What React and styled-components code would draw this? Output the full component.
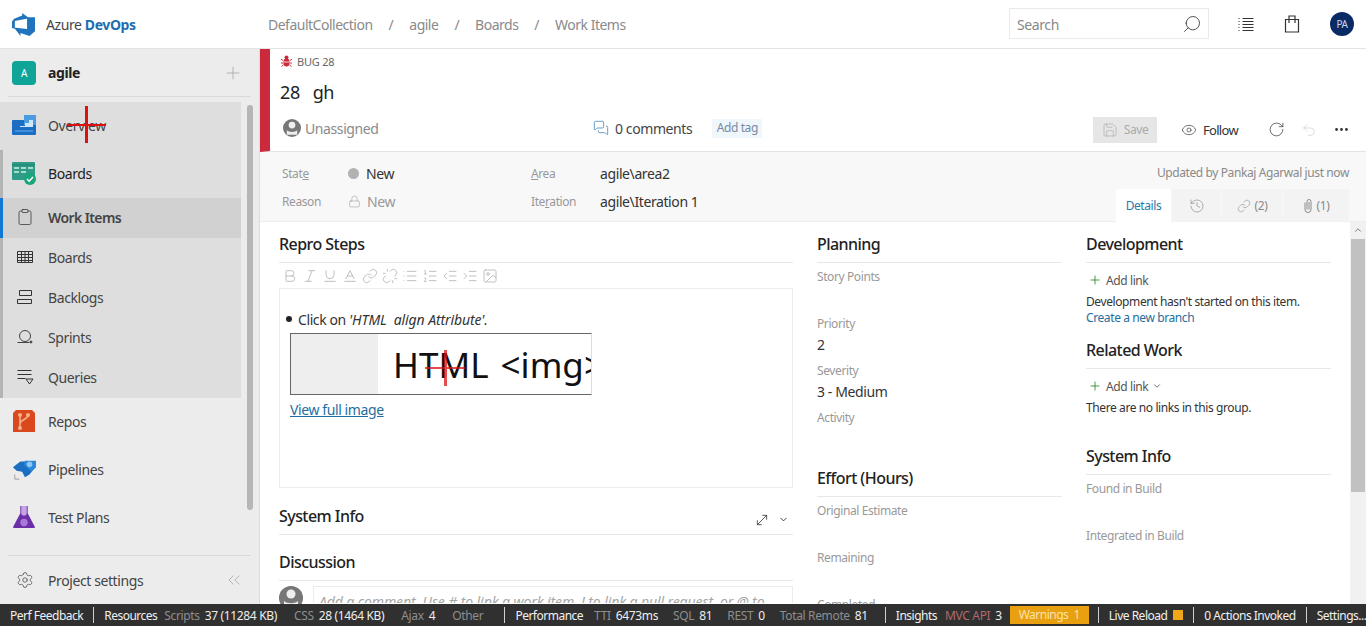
import React from 'react'
import styled, { createGlobalStyle } from 'styled-components'
import {
  Search, Plus, Eye, RotateCw, Undo2, MoreHorizontal, History,
  Lock, Settings, ChevronsLeft, ChevronDown, MoveDiagonal, MessagesSquare, Save, Bold, Italic, Underline,
  Link, Unlink, List, ListOrdered, Indent, Outdent, Image, Baseline, Clipboard, ChevronUp,
} from 'lucide-react'

const GlobalStyle = createGlobalStyle`
  html, body { margin: 0; padding: 0; height: 100%; overflow: hidden; }
  body { font-family: "Noto Sans", "Open Sans", sans-serif; font-size: 13px; color: #333; background: #fff; letter-spacing: -0.4px; }
  * { box-sizing: border-box; }
`

const Page = styled.div`
  height: 626px;
  display: flex;
  flex-direction: column;
  position: relative;
  overflow: hidden;
`

/* top bar */
const TopBar = styled.header`
  height: 49px;
  flex: none;
  display: flex;
  align-items: center;
  border-bottom: 1px solid #e4e4e4;
`
const Brand = styled.div`
  width: 268px;
  flex: none;
  display: flex;
  align-items: center;
  padding-left: 12px;
  gap: 11px;
  font-size: 14px;
  color: #444;
  b { color: #1f6fb0; font-weight: 700; }
`
const Crumbs = styled.nav`
  flex: 1;
  display: flex;
  align-items: center;
  gap: 16px;
  font-size: 14px;
  letter-spacing: -0.5px;
  color: #8a8a8a;
`
const SearchBox = styled.div`
  width: 200px;
  height: 31px;
  margin-top: -1px;
  display: flex;
  align-items: center;
  justify-content: space-between;
  padding: 1px 6px 0 7px;
  border: 1px solid #eaeaea;
  font-size: 14px;
  color: #888;
`
const TopIcons = styled.div`
  width: 157px;
  display: flex;
  align-items: center;
  padding-left: 28px;
  gap: 29px;
  color: #333;
`
const Avatar = styled.div`
  width: 24px;
  height: 24px;
  border-radius: 50%;
  margin-left: 1px;
  background: #0a2a66;
  color: #cfd8ea;
  font-size: 10px;
  display: flex;
  align-items: center;
  justify-content: center;
`

const Body = styled.div`
  flex: 1;
  min-height: 0;
  display: flex;
`

/* left navigation */
const Side = styled.aside`
  width: 260px;
  flex: none;
  display: flex;
  flex-direction: column;
  background: #ececec;
  border-right: 1px solid #dcdcdc;
`
const Project = styled.div`
  height: 48px;
  flex: none;
  margin: 0 8px 5px;
  padding: 0 8px 0 4px;
  border-bottom: 1px solid #d9d9d9;
  display: flex;
  align-items: center;
  gap: 12px;
  font-size: 14px;
  font-weight: 700;
  color: #222;
  span:last-child { margin-left: auto; color: #aaa; display: flex; }
`
const ProjectBadge = styled.span`
  width: 24px;
  height: 24px;
  border-radius: 4px;
  background: #0ea598;
  color: #fff;
  font-size: 10px;
  font-weight: 400;
  display: flex;
  align-items: center;
  justify-content: center;
`
const NavWrap = styled.div`
  flex: 1;
  min-height: 0;
  display: flex;
`
const NavList = styled.div`
  width: 241px;
  flex: none;
`
const NavItem = styled.div`
  height: ${p => (p.$sub ? 40 : 48)}px;
  display: flex;
  align-items: center;
  gap: ${p => (p.$sub ? 14 : 12)}px;
  padding: 0 0 2px ${p => (p.$sub ? 16 : 12)}px;
  font-size: 14px;
  letter-spacing: ${p => (p.$selected ? -0.6 : -0.4)}px;
  color: ${p => (p.$strong ? '#222' : '#444')};
  font-weight: ${p => (p.$selected ? 600 : 400)};
  background: ${p => (p.$selected ? '#d1d1d1' : p.$tinted ? '#dedede' : 'transparent')};
  box-shadow: inset 3px 0 0 ${p => (p.$selected ? '#0f78d4' : p.$group ? '#b4b4b4' : 'transparent')};
  svg { flex: none; }
`
const NavScroll = styled.div`
  flex: 1;
  padding: 3px 6px 0;
  div { height: 405px; width: 6px; background: #b6b6b6; border-radius: 3px; }
`
const SideFoot = styled.div`
  height: 49px;
  flex: none;
  margin: 0 8px;
  padding: 0 7px 0 8px;
  border-top: 1px solid #d9d9d9;
  display: flex;
  align-items: center;
  gap: 14px;
  font-size: 14px;
  color: #444;
  span { flex: 1; }
`

/* work item */
const Main = styled.main`
  flex: 1;
  min-width: 0;
  display: flex;
  flex-direction: column;
  overflow: hidden;
`
const ItemHead = styled.section`
  height: 103px;
  flex: none;
  display: flex;
  border-bottom: 1px solid #e4e4e4;
  border-left: 10px solid #cc293d;
`
const HeadInner = styled.div`
  flex: 1;
  padding: 4px 0 0 10px;
`
const BugLine = styled.div`
  height: 16px;
  display: flex;
  align-items: center;
  gap: 5px;
  padding-left: 1px;
  font-size: 11px;
  letter-spacing: -0.2px;
  color: #666;
`
const Title = styled.div`
  margin-top: 10px;
  height: 28px;
  font-size: 18px;
  line-height: 26px;
  color: #222;
  white-space: pre;
`
const HeadRow = styled.div`
  margin-top: 6px;
  display: flex;
  align-items: center;
  height: 30px;
`
const Assigned = styled.div`
  width: 310px;
  margin-left: 3px;
  display: flex;
  align-items: center;
  gap: 4px;
  font-size: 14px;
  color: #8a8a8a;
`
const Comments = styled.div`
  display: flex;
  align-items: center;
  gap: 6px;
  font-size: 14px;
  color: #444;
  svg { color: #1f6fb0; }
`
const Tag = styled.span`
  margin-left: 20px;
  width: 50px;
  text-align: center;
  height: 19px;
  line-height: 18px;
  background: #eff6fc;
  color: #7a8aa0;
  font-size: 12px;
`
const Actions = styled.div`
  margin-left: auto;
  margin-top: 3px;
  padding-right: 16px;
  display: flex;
  align-items: center;
  color: #333;
`
const SaveBtn = styled.div`
  width: 64px;
  height: 26px;
  background: #e6e6e6;
  color: #aaa;
  font-size: 12px;
  display: flex;
  align-items: center;
  justify-content: center;
  gap: 6px;
`
const FollowBtn = styled.div`
  margin-left: 24px;
  display: flex;
  align-items: center;
  gap: 6px;
  font-size: 13px;
  letter-spacing: -0.7px;
  color: #333;
  width: 87px;
`
const ActionIcon = styled.span`
  display: flex;
  margin-right: ${p => p.$gap || 0}px;
  color: ${p => (p.$muted ? '#ccc' : '#333')};
`

/* state band */
const Band = styled.section`
  height: 70px;
  flex: none;
  background: #f8f8f8;
  display: flex;
  border-bottom: 1px solid #ececec;
`
const BandGrid = styled.div`
  flex: 1;
  display: grid;
  grid-template-columns: 66px 183px 69px 1fr;
  grid-auto-rows: 28px;
  padding: 7px 0 0 22px;
  align-items: center;
`
const BandLabel = styled.div`
  font-size: 12px;
  color: #999;
  u { text-decoration-thickness: 1px; }
`
const BandValue = styled.div`
  display: flex;
  align-items: center;
  gap: 6px;
  font-size: 14px;
  color: ${p => (p.$muted ? '#999' : '#333')};
`
const Dot = styled.i`
  width: 11px;
  height: 11px;
  border-radius: 50%;
  background: #b2b2b2;
  margin-right: 1px;
`
const BandRight = styled.div`
  width: 260px;
  padding-right: 17px;
  display: flex;
  flex-direction: column;
  align-items: flex-end;
`
const Updated = styled.div`
  margin-top: 12px;
  font-size: 12px;
  color: #8a8a8a;
  height: 25px;
`
const Tabs = styled.div`
  display: flex;
  gap: 1px;
  height: 33px;
  margin-bottom: -1px;
`
const TabItem = styled.div`
  width: ${p => p.$w}px;
  display: flex;
  align-items: center;
  justify-content: center;
  gap: 4px;
  font-size: 12px;
  color: ${p => (p.$active ? '#2a7aa8' : '#8a8a8a')};
  background: ${p => (p.$active ? '#fff' : '#f3f3f3')};
`

/* form area */
const Scroller = styled.div`
  flex: 1;
  min-height: 0;
  display: flex;
`
const Form = styled.div`
  flex: 1;
  display: grid;
  grid-template-columns: 514px 245px 245px;
  column-gap: 24px;
  padding: 11px 0 0 19px;
  align-content: start;
  align-items: start;
`
const Column = styled.div`
  display: flex;
  flex-direction: column;
`
const Heading = styled.div`
  height: 30px;
  flex: none;
  display: flex;
  align-items: center;
  justify-content: space-between;
  border-bottom: 1px solid #e8e8e8;
  font-size: 16px;
  font-weight: 500;
  letter-spacing: -0.55px;
  color: #222;
  padding-bottom: 8px;
  margin-top: ${p => p.$top || 0}px;
`
const Toolbar = styled.div`
  height: 25px;
  display: flex;
  align-items: center;
  padding: 1px 0 0 3px;
  gap: 4px;
  color: #bbb;
`
const Editor = styled.div`
  height: 200px;
  border: 1px solid #ececec;
  padding: 21px 0 0 6px;
  font-size: 14px;
  color: #333;
`
const Bullet = styled.div`
  display: flex;
  gap: 6px;
  align-items: center;
  height: 18px;
  white-space: pre;
  i { width: 6px; height: 6px; border-radius: 50%; background: #222; }
  em { font-style: italic; letter-spacing: -0.1px; }
`
const Shot = styled.div`
  margin: 5px 0 0 4px;
  width: 302px;
  height: 62px;
  border: 1px solid #666;
  border-right-color: #ddd;
  overflow: hidden;
  display: flex;
  align-items: center;
  font-size: 35px;
  color: #111;
  white-space: nowrap;
  letter-spacing: 0;
  word-spacing: 3px;
  &::before {
    content: '';
    width: 87px;
    align-self: stretch;
    background: #eee;
    flex: none;
    margin-right: 15px;
  }
`
const FullLink = styled.a`
  display: block;
  margin: 5px 0 0 4px;
  font-size: 14px;
  color: #1f6e9e;
  text-decoration: underline;
`
const InfoBar = styled.span`
  display: flex;
  align-items: center;
  gap: 8px;
  color: #333;
  margin-top: 8px;
  margin-right: 4px;
`
const CommentRow = styled.div`
  display: flex;
  gap: 10px;
  margin-top: 5px;
`
const Person = styled.div`
  width: 24px;
  height: 24px;
  flex: none;
  border-radius: 50%;
  background: #8a8a8a;
  overflow: hidden;
`
const CommentBox = styled.div`
  flex: 1;
  height: 17px;
  border: 1px solid #ececec;
  border-bottom: 0;
  padding: 5px 0 0 5px;
  font-style: italic;
  font-size: 14px;
  letter-spacing: -0.1px;
  color: #a6a6a6;
  white-space: nowrap;
  overflow: hidden;
`
const Field = styled.div`
  height: 47px;
  flex: none;
  padding-top: 5px;
`
const FieldLabel = styled.div`
  height: 18px;
  font-size: 12px;
  color: #999;
  line-height: 18px;
`
const FieldValue = styled.div`
  margin-top: 2px;
  font-size: 14px;
  color: #333;
  line-height: 20px;
`
const AddLink = styled.div`
  display: flex;
  align-items: center;
  gap: 4px;
  margin: 8px 0 0 2px;
  font-size: 12px;
  color: #555;
  height: 18px;
  svg:first-child { color: #107c10; }
`
const Note = styled.div`
  font-size: 12px;
  color: #333;
  line-height: 16px;
  margin-top: ${p => p.$top || 0}px;
`
const BranchLink = styled(Note)`
  color: #1f6e9e;
`
const VScroll = styled.div`
  width: 16px;
  flex: none;
  background: #f1f1f1;
  display: flex;
  flex-direction: column;
  align-items: center;
  color: #666;
  div { margin-top: 4px; width: 14px; height: 253px; background: #c1c1c1; }
`

/* perf bar */
const PerfBar = styled.footer`
  height: 22px;
  flex: none;
  background: #303030;
  color: #f0f0f0;
  display: flex;
  align-items: center;
  padding-left: 10px;
  font-size: 12px;
  white-space: nowrap;
  overflow: hidden;
  letter-spacing: -0.5px;
`
const PerfGroup = styled.div`
  display: flex;
  align-items: center;
  gap: ${p => p.$gap || 0}px;
  height: 16px;
  padding-right: ${p => p.$pad ?? 10}px;
  margin-right: 10px;
  border-right: ${p => (p.$last ? 'none' : '1px solid #d0d0d0')};
`
const PerfLabel = styled.span`
  margin-right: ${p => p.$tight || 0}px;
`
const PerfStat = styled.span`
  color: #eee;
  letter-spacing: -0.35px;
  i { font-style: normal; color: ${p => p.$c || '#8e8e8e'}; margin-right: 5px; }
`
const Warn = styled.span`
  background: #e8a010;
  color: #fbe3a8;
  width: 79px;
  height: 18px;
  line-height: 18px;
  text-align: center;
  white-space: pre;
`
const Square = styled.i`
  display: inline-block;
  width: 10px;
  height: 10px;
  background: #f0a818;
  margin-left: 6px;
`

/* red crosshair annotations lying over the page */
const Cross = styled.div`
  position: absolute;
  left: ${p => p.$x}px;
  top: ${p => p.$y}px;
  width: ${p => p.$w}px;
  height: ${p => p.$h}px;
  background: linear-gradient(#dd1111, #dd1111) center/100% 2px no-repeat,
    linear-gradient(#dd1111, #dd1111) center/3px 100% no-repeat;
  opacity: ${p => p.$o || 1};
`

const LogoMark = () => (
  <svg width="23" height="23" viewBox="0 0 24 24" fill="#1f74bd">
    <path d="M0 8.877L2.247 5.91l8.405-3.416V.022l7.37 5.393L2.966 8.338v8.225L0 15.707zm24-4.45v14.651l-5.753 4.9-9.303-3.057v3.056l-6.978-8.965 13.748 1.627V4.428z" />
  </svg>
)
const OverviewIcon = () => (
  <svg width="24" height="24" viewBox="0 0 24 24">
    <rect y="7" width="24" height="15" rx="1" fill="#1b6ec2" />
    <rect x="12" y="2" width="12" height="10" fill="#4a9be0" />
    <path d="M8 13h5v-3h4V7h4v7H8z" fill="#cfe6fa" />
    <rect x="3" y="17" width="18" height="2" fill="#3f8fdc" />
  </svg>
)
const BoardsIcon = () => (
  <svg width="24" height="24" viewBox="0 0 24 24">
    <rect y="1" width="23" height="18" rx="1" fill="#2f9c87" />
    <path d="M0 4h23" stroke="#1d7f6c" strokeWidth="1" />
    <path d="M2 6h5v2H2zM2 10h5v2H2zM9 6h5v2H9zM16 6h5v2h-5zM9 10h5v2H9z" fill="#a8dccf" />
    <circle cx="18" cy="18" r="6" fill="#19a67a" />
    <path d="M15 18l2.2 2.2L21 16" stroke="#fff" strokeWidth="1.5" fill="none" />
  </svg>
)
const ReposIcon = () => (
  <svg width="24" height="24" viewBox="0 0 24 24">
    <path d="M1 4l3-3h16l3 3v19H1z" fill="#d9491d" />
    <path d="M8 19V7M16 6c0 5-8 4-8 9" stroke="#f6b08c" strokeWidth="1.6" fill="none" />
    <circle cx="8" cy="6" r="2" fill="#f6b08c" />
    <circle cx="16" cy="6" r="2" fill="#f6b08c" />
    <circle cx="8" cy="19" r="2" fill="#f6b08c" />
  </svg>
)
const PipelinesIcon = () => (
  <svg width="24" height="24" viewBox="0 0 26 26">
    <path d="M1 11l8-6h17v5l-7 9-5 3-3-6-6-1z" fill="#1b6ec2" />
    <path d="M14 4h12v7l-5 5-8-8z" fill="#2b88d8" />
    <circle cx="19" cy="8" r="3" fill="#8cc4f2" />
    <path d="M3 24v-5M3 24h5" stroke="#aaa" strokeWidth="1.2" />
  </svg>
)
const PlansIcon = () => (
  <svg width="24" height="24" viewBox="0 0 26 26">
    <path d="M9 1h8v8l8 15-1 1H2l-1-1L9 9z" fill="#6b2fa8" />
    <path d="M10 1h6v9l-3 2-3-2z" fill="#c7a4e6" />
    <circle cx="13" cy="19" r="4" fill="#a878d8" />
  </svg>
)
const WorkIcon = () => <Clipboard size={18} strokeWidth={1} color="#333" />
const GridIcon = () => (
  <svg width="18" height="18" viewBox="0 0 18 18" fill="none" stroke="#333">
    <path d="M1.5 3.5h15v11h-15zM1.5 6.5h15M1.5 9.5h15M1.5 12.5h15M5.5 3.5v11M9 3.5v11M12.5 3.5v11" />
  </svg>
)
const BacklogIcon = () => (
  <svg width="18" height="18" viewBox="0 0 18 18" fill="none" stroke="#333">
    <path d="M3.5 2.5h12M3.5 7.5h12M1.5 11.5h14M1.5 15.5h14M3.5 2.5v5M15.5 2.5v5M1.5 11.5v4M15.5 11.5v4" />
  </svg>
)
const SprintIcon = () => (
  <svg width="18" height="18" viewBox="0 0 18 18" fill="none" stroke="#444">
    <circle cx="9" cy="8" r="5.5" />
    <path d="M1.5 14.5h12" />
    <circle cx="15" cy="14" r="1" fill="#444" />
  </svg>
)
const QueryIcon = () => (
  <svg width="18" height="18" viewBox="0 0 18 18" fill="none" stroke="#333">
    <path d="M1.5 2.5h14M1.5 6.5h14M1.5 10.5h8M10 11h7l-3.5 5z" />
  </svg>
)
const PersonIcon = ({ size }) => (
  <svg width={size} height={size} viewBox="0 0 24 24">
    <circle cx="12" cy="12" r="12" fill="#777" />
    <circle cx="12" cy="8" r="4.5" fill="#eee" />
    <path d="M5 21v-6c3 3 11 3 14 0v6z" fill="#eee" />
  </svg>
)
const BugGlyph = () => (
  <svg width="11" height="12" viewBox="0 0 11 12" fill="#cc293d">
    <circle cx="5.5" cy="2.5" r="2" />
    <ellipse cx="5.5" cy="7.5" rx="3.2" ry="4" />
    <path d="M0 4l2 1.5M11 4L9 5.5M0 8h2M11 8H9M0.5 11.5L2.5 10M10.5 11.5L8.5 10" stroke="#cc293d" strokeWidth="1" />
    <path d="M2.5 7h6" stroke="#fff" strokeWidth="0.8" />
  </svg>
)
const NotesIcon = () => (
  <svg width="18" height="18" viewBox="0 0 18 18" fill="none" stroke="#333" strokeWidth="1">
    <path d="M5.5 3.5h11M5.5 6.5h11M5.5 9.5h11M5.5 12.5h11M5.5 15.5h11" />
    <path d="M1.5 3.5h2M1.5 6.5h2M1.5 9.5h2M1.5 12.5h2M1.5 15.5h2" strokeDasharray="1 1" />
  </svg>
)
const BagIcon = () => (
  <svg width="16" height="18" viewBox="0 0 16 18" fill="none" stroke="#333" strokeWidth="1.2">
    <path d="M1.5 4.5h13v12.5h-13zM5 8V1h6v7" />
  </svg>
)
const ClipIcon = () => (
  <svg width="10" height="14" viewBox="0 0 10 14" fill="none" stroke="#8a8a8a">
    <path d="M2 3.5v7a3 3 0 0 0 6 0v-8a2 2 0 0 0-4 0v8M6 3v7.5" />
  </svg>
)

const subItems = [
  { label: 'Work Items', icon: <WorkIcon />, selected: true },
  { label: 'Boards', icon: <GridIcon /> },
  { label: 'Backlogs', icon: <BacklogIcon /> },
  { label: 'Sprints', icon: <SprintIcon /> },
  { label: 'Queries', icon: <QueryIcon /> },
]

const Sidebar = () => (
  <Side>
    <Project>
      <ProjectBadge>A</ProjectBadge>
      <span>agile</span>
      <span><Plus size={20} strokeWidth={1} /></span>
    </Project>
    <NavWrap>
      <NavList>
        <NavItem $tinted><OverviewIcon />Overview</NavItem>
        <NavItem $tinted $group $strong><BoardsIcon />Boards</NavItem>
        {subItems.map(s => (
          <NavItem key={s.label} $sub $group $tinted $selected={s.selected}>{s.icon}{s.label}</NavItem>
        ))}
        <NavItem><ReposIcon />Repos</NavItem>
        <NavItem><PipelinesIcon />Pipelines</NavItem>
        <NavItem><PlansIcon />Test Plans</NavItem>
      </NavList>
      <NavScroll><div /></NavScroll>
    </NavWrap>
    <SideFoot>
      <Settings size={18} strokeWidth={1} />
      <span>Project settings</span>
      <ChevronsLeft size={20} strokeWidth={1} color="#aaa" />
    </SideFoot>
  </Side>
)

const Field2 = ({ label, value }) => (
  <Field>
    <FieldLabel>{label}</FieldLabel>
    {value && <FieldValue>{value}</FieldValue>}
  </Field>
)

const toolIcons = [Bold, Italic, Underline, Baseline, Link, Unlink, List, ListOrdered, Outdent, Indent, Image]

const App = () => (
  <Page>
    <GlobalStyle />
    <TopBar>
      <Brand><LogoMark /><span>Azure <b>DevOps</b></span></Brand>
      <Crumbs>
        <span>DefaultCollection</span><span>/</span><span>agile</span><span>/</span><span>Boards</span><span>/</span><span>Work Items</span>
      </Crumbs>
      <SearchBox>Search<Search size={20} strokeWidth={1} color="#333" style={{ transform: 'scaleX(-1)' }} /></SearchBox>
      <TopIcons>
        <NotesIcon />
        <BagIcon />
        <Avatar>PA</Avatar>
      </TopIcons>
    </TopBar>
    <Body>
      <Sidebar />
      <Main>
        <ItemHead>
          <HeadInner>
            <BugLine><BugGlyph />BUG 28</BugLine>
            <Title>28   gh</Title>
            <HeadRow>
              <Assigned><PersonIcon size={18} />Unassigned</Assigned>
              <Comments><MessagesSquare size={16} strokeWidth={1} />0 comments</Comments>
              <Tag>Add tag</Tag>
              <Actions>
                <SaveBtn><Save size={16} strokeWidth={1} />Save</SaveBtn>
                <FollowBtn><Eye size={16} strokeWidth={1} />Follow</FollowBtn>
                <ActionIcon $gap={16}><RotateCw size={17} strokeWidth={1} /></ActionIcon>
                <ActionIcon $gap={16} $muted><Undo2 size={16} strokeWidth={1} /></ActionIcon>
                <ActionIcon><MoreHorizontal size={17} strokeWidth={2} /></ActionIcon>
              </Actions>
            </HeadRow>
          </HeadInner>
        </ItemHead>
        <Band>
          <BandGrid>
            <BandLabel>Stat<u>e</u></BandLabel>
            <BandValue><Dot />New</BandValue>
            <BandLabel><u>A</u>rea</BandLabel>
            <BandValue>agile\area2</BandValue>
            <BandLabel>Reason</BandLabel>
            <BandValue $muted><Lock size={13} strokeWidth={1} />New</BandValue>
            <BandLabel>Ite<u>r</u>ation</BandLabel>
            <BandValue>agile\Iteration 1</BandValue>
          </BandGrid>
          <BandRight>
            <Updated>Updated by Pankaj Agarwal just now</Updated>
            <Tabs>
              <TabItem $active $w={55}>Details</TabItem>
              <TabItem $w={49}><History size={16} strokeWidth={1} /></TabItem>
              <TabItem $w={60}><Link size={14} strokeWidth={1} />(2)</TabItem>
              <TabItem $w={66}><ClipIcon />(1)</TabItem>
            </Tabs>
          </BandRight>
        </Band>
        <Scroller>
          <Form>
            <Column>
              <Heading>Repro Steps</Heading>
              <Toolbar>
                {toolIcons.map((Ico, i) => <Ico key={i} size={16} strokeWidth={1.4} />)}
              </Toolbar>
              <Editor>
                <Bullet><i /><span>Click on <em>'HTML  align Attribute'.</em></span></Bullet>
                <Shot>HTML &lt;img&gt;</Shot>
                <FullLink>View full image</FullLink>
              </Editor>
              <Heading $top={17}>System Info<InfoBar><MoveDiagonal size={16} strokeWidth={1.2} /><ChevronDown size={11} /></InfoBar></Heading>
              <Heading $top={16}>Discussion</Heading>
              <CommentRow>
                <Person><PersonIcon size={24} /></Person>
                <CommentBox>Add a comment. Use # to link a work item, ! to link a pull request, or @ to</CommentBox>
              </CommentRow>
            </Column>
            <Column>
              <Heading>Planning</Heading>
              <Field2 label="Story Points" />
              <Field2 label="Priority" value="2" />
              <Field2 label="Severity" value="3 - Medium" />
              <Field2 label="Activity" />
              <Heading $top={16}>Effort (Hours)</Heading>
              <Field2 label="Original Estimate" />
              <Field2 label="Remaining" />
              <Field2 label="Completed" />
            </Column>
            <Column>
              <Heading>Development</Heading>
              <AddLink><Plus size={14} strokeWidth={1.3} />Add link</AddLink>
              <Note $top={5}>Development hasn't started on this item.</Note>
              <BranchLink>Create a new branch</BranchLink>
              <Heading $top={13}>Related Work</Heading>
              <AddLink><Plus size={14} strokeWidth={1.3} />Add link<ChevronDown size={10} /></AddLink>
              <Note $top={5}>There are no links in this group.</Note>
              <Heading $top={29}>System Info</Heading>
              <Field2 label="Found in Build" />
              <Field2 label="Integrated in Build" />
            </Column>
          </Form>
          <VScroll><ChevronUp size={10} style={{ marginTop: 3 }} /><div /></VScroll>
        </Scroller>
      </Main>
    </Body>
    <PerfBar>
      <PerfGroup>Perf Feedback</PerfGroup>
      <PerfGroup $gap={17} $pad={16}>
        <PerfLabel $tight={-10}>Resources</PerfLabel>
        <PerfStat><i>Scripts</i>37 (11284 KB)</PerfStat>
        <PerfStat><i>CSS</i>28 (1464 KB)</PerfStat>
        <PerfStat><i>Ajax</i>4</PerfStat>
        <PerfStat><i>Other</i></PerfStat>
      </PerfGroup>
      <PerfGroup $gap={15} $pad={17}>
        <PerfLabel $tight={-4}>Performance</PerfLabel>
        <PerfStat><i>TTI</i>6473ms</PerfStat>
        <PerfStat><i>SQL</i>81</PerfStat>
        <PerfStat><i>REST</i>0</PerfStat>
        <PerfStat><i>Total Remote</i>81</PerfStat>
      </PerfGroup>
      <PerfGroup $gap={8} $pad={9}>
        <span>Insights</span>
        <PerfStat $c="#b06a6a"><i>MVC API</i>3</PerfStat>
        <Warn>Warnings  1</Warn>
      </PerfGroup>
      <PerfGroup>Live Reload<Square /></PerfGroup>
      <PerfGroup>0 Actions Invoked</PerfGroup>
      <PerfGroup $last>Settings...</PerfGroup>
    </PerfBar>
    <Cross $x={67} $y={106} $w={39} $h={37} />
    <Cross $x={425} $y={350} $w={40} $h={36} $o={0.75} />
  </Page>
)

export default App
